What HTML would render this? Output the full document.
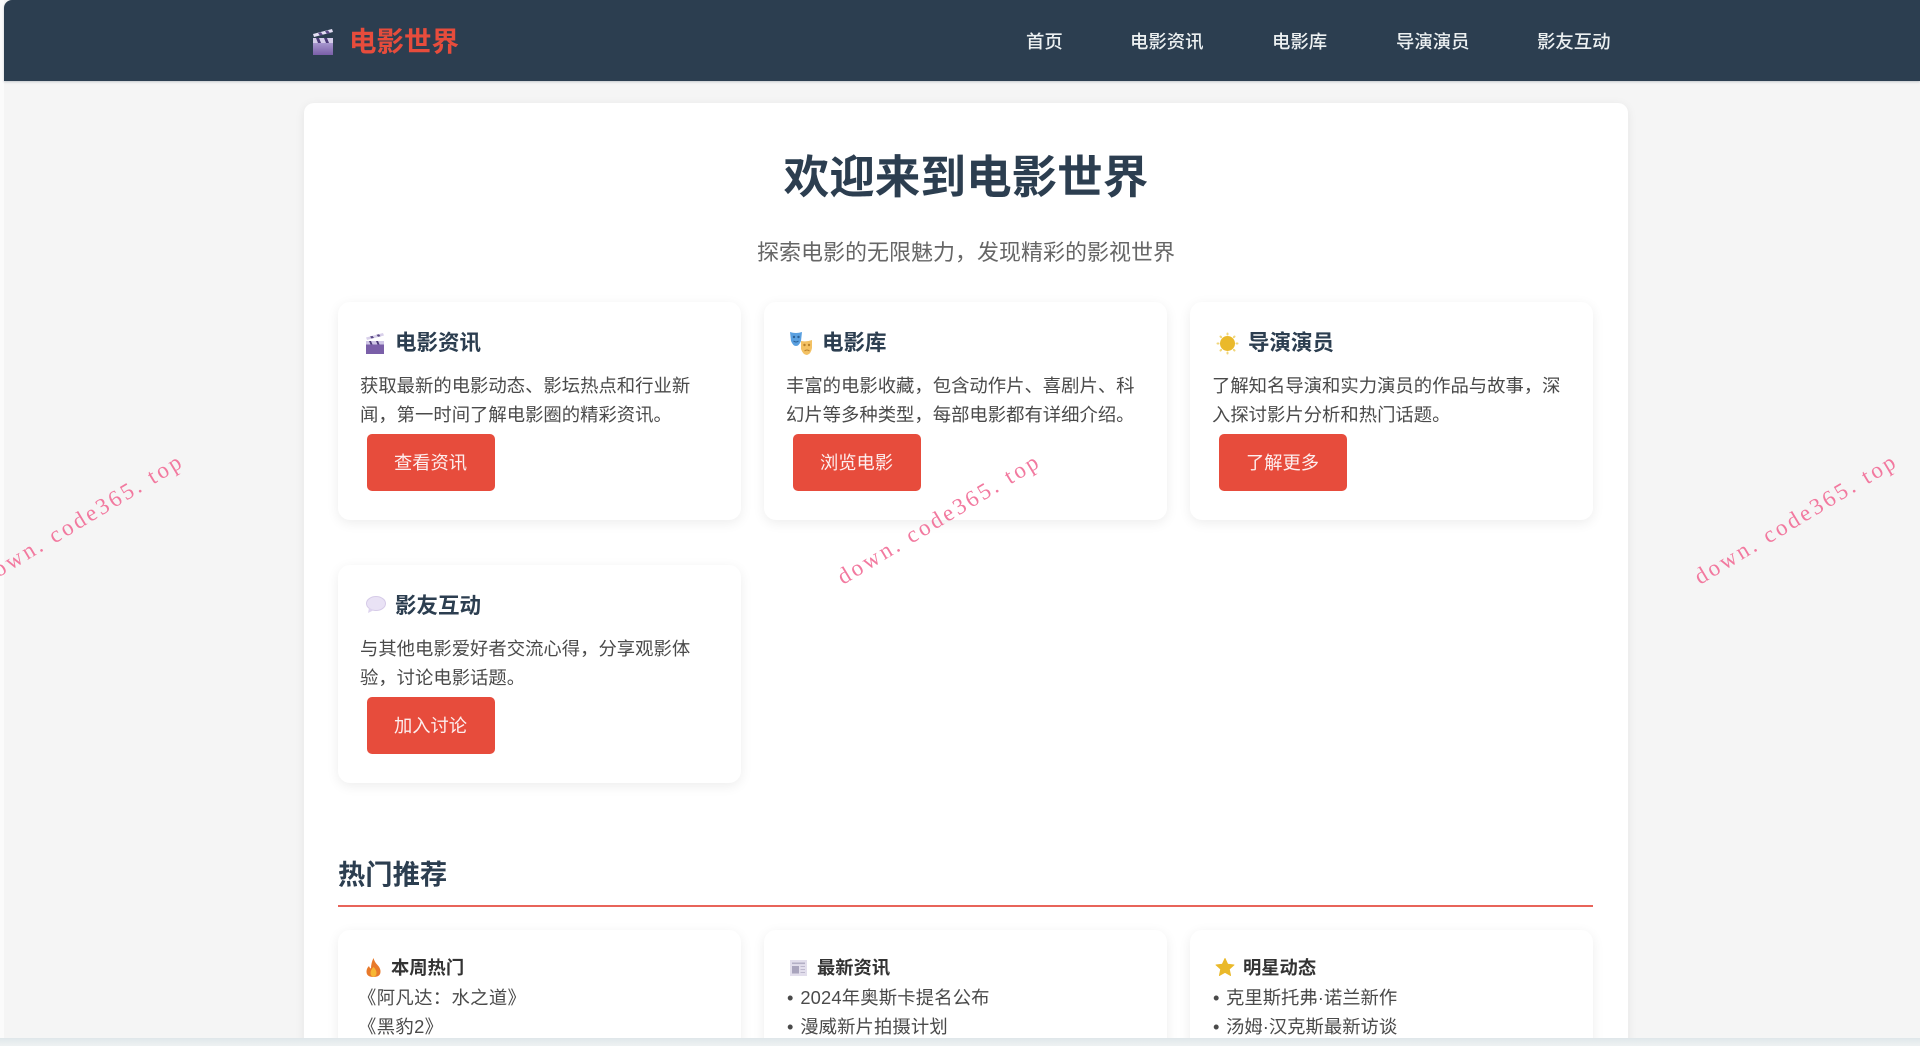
<!DOCTYPE html>
<html lang="zh"><head><meta charset="utf-8"><title>电影世界</title>
<style>
*{margin:0;padding:0;box-sizing:border-box}
html,body{width:1920px;height:1046px;overflow:hidden;background:#f5f5f5}
body{position:relative;font-family:"Liberation Sans","Noto Sans CJK SC",sans-serif;color:#444;filter:blur(.35px)}
.a{position:absolute;white-space:nowrap}
#edge{left:0;top:0;width:4px;height:1046px;background:#fbfbfb}
#hd{left:4px;top:0;width:1916px;height:81px;background:#2c3e50;border-top-left-radius:8px;box-shadow:0 1px 2px rgba(44,62,80,.25)}
.nav{top:25px;height:33px;line-height:33px;font-size:18.4px;color:#ecf0f1;font-weight:500}
#main{left:304px;top:103px;width:1324px;height:980px;background:#fff;border-radius:10px;box-shadow:0 2px 10px rgba(0,0,0,.07)}
.card{position:absolute;background:#fff;border-radius:12px;box-shadow:0 3px 12px rgba(0,0,0,.075);width:403px}
.t{font-size:21.5px;font-weight:700;color:#2c3e50;line-height:30px;height:30px}
.p{font-size:18.35px;line-height:29px;height:29px;color:#4a4a4a}
.btn{background:#e74c3c;color:#fdeeee;border-radius:5px;width:128px;height:57px;line-height:58px;text-align:center;font-size:18.3px;padding-right:1px}
.s{font-size:18.3px;font-weight:700;color:#333;line-height:28px;height:28px}
svg{position:absolute;overflow:visible}
#bar{left:0;top:1038px;width:1920px;height:8px;background:linear-gradient(#dfe6e9,#e6ecee 40%,#eef1f2)}
</style></head><body>
<div class="a" id="edge"></div>
<div class="a" id="hd"></div>

<svg style="left:312px;top:29px" width="22" height="26" viewBox="0 0 22 26"><defs><linearGradient id="g" x1="0" y1="0" x2="0" y2="1"><stop offset="0" stop-color="#b9aede"/><stop offset="1" stop-color="#7a5fa8"/></linearGradient></defs><rect x="1" y="9" width="20" height="17" fill="url(#g)"/><path d="M1 9h20v5H1z" fill="#d5cdea"/><path d="M4 9l2 5h3L7 9zM12 9l2 5h3l-2-5z" fill="#4b3b78"/><path d="M1 5L20 0l1 3L2 8z" fill="#e4dff3"/><path d="M6 4l3-.8 2 2.800-3 .8zM13 2.200l3-.8 2 2.800-3 .8z" fill="#5b4a86"/></svg>
<div class="a" style="left:349px;top:22px;height:40px;line-height:40px;font-size:27.5px;font-weight:700;color:#e74c3c">电影世界</div>

<div class="a nav" style="left:1026px">首页</div>
<div class="a nav" style="left:1130px">电影资讯</div>
<div class="a nav" style="left:1272px">电影库</div>
<div class="a nav" style="left:1396px">导演演员</div>
<div class="a nav" style="left:1537px">影友互动</div>

<div class="a" id="main"></div>
<div class="a" style="left:304px;width:1324px;top:145px;height:66px;line-height:66px;text-align:center;font-size:45.6px;font-weight:700;color:#2c3e50">欢迎来到电影世界</div>
<div class="a" style="left:304px;width:1324px;top:236px;height:34px;line-height:34px;text-align:center;font-size:22px;color:#666">探索电影的无限魅力，发现精彩的影视世界</div>

<div class="card" style="left:338px;top:302px;height:218px"></div>
<div class="card" style="left:764px;top:302px;height:218px"></div>
<div class="card" style="left:1190px;top:302px;height:218px"></div>
<div class="card" style="left:338px;top:565px;height:218px"></div>

<svg style="left:366px;top:333px" width="18" height="21" viewBox="0 0 18 21"><rect x="0" y="8" width="18" height="13" fill="#7a5fa8"/><path d="M0 8h18v3.500H0z" fill="#cfc6e6"/><path d="M3 8l1.500 3.500h2L5 8zM10 8l1.500 3.500h2L12 8z" fill="#4b3b78"/><path d="M0 4.500L17 0l1 2.500L1 7z" fill="#d8d0ea"/><path d="M4 3.500l2.500-.6 1.500 2-2.500.6zM10.500 1.800l2.500-.6 1.500 2-2.500.6z" fill="#5b4a86"/></svg>
<div class="a t" style="left:395px;top:328px">电影资讯</div>
<div class="a p" style="left:360px;top:371px">获取最新的电影动态、影坛热点和行业新</div>
<div class="a p" style="left:360px;top:400px">闻，第一时间了解电影圈的精彩资讯。</div>
<div class="a btn" style="left:367px;top:434px">查看资讯</div>

<svg style="left:790px;top:331px" width="23" height="24" viewBox="0 0 23 24"><path d="M0 1q6 2 12 0l-1 9q-2 5-5 5t-5-5z" fill="#5aa0e0"/><circle cx="4" cy="6" r="1.200" fill="#2a6096"/><circle cx="8.500" cy="6" r="1.200" fill="#2a6096"/><path d="M3.500 10q2.500 2 5 0" stroke="#2a6096" fill="none"/><path d="M11 10q6 1 11-1l0 8q-1 6-5 7-4 0-6-6z" fill="#f3c163"/><circle cx="14.500" cy="14" r="1.200" fill="#b8802a"/><circle cx="19" cy="14" r="1.200" fill="#b8802a"/><path d="M14.500 20q2.500-2 5 0" stroke="#b8802a" fill="none"/></svg>
<div class="a t" style="left:822px;top:328px">电影库</div>
<div class="a p" style="left:786px;top:371px">丰富的电影收藏，包含动作片、喜剧片、科</div>
<div class="a p" style="left:786px;top:400px">幻片等多种类型，每部电影都有详细介绍。</div>
<div class="a btn" style="left:793px;top:434px">浏览电影</div>

<svg style="left:1216px;top:332px" width="23" height="23" viewBox="0 0 23 23"><circle cx="11.500" cy="11.500" r="7.500" fill="#eab92a"/><g stroke="#f1d67a" stroke-width="2" stroke-linecap="round"><path d="M11.500 1.500v1M11.500 20.500v1M1.500 11.500h1M20.500 11.500h1M4.500 4.500l.7.7M17.800 17.800l.7.7M18.500 4.500l-.7.7M5.200 17.800l-.7.7"/></g></svg>
<div class="a t" style="left:1248px;top:328px">导演演员</div>
<div class="a p" style="left:1212px;top:371px">了解知名导演和实力演员的作品与故事，深</div>
<div class="a p" style="left:1212px;top:400px">入探讨影片分析和热门话题。</div>
<div class="a btn" style="left:1219px;top:434px">了解更多</div>

<svg style="left:365px;top:596px" width="21" height="18" viewBox="0 0 21 18"><ellipse cx="11" cy="7.500" rx="9.500" ry="7" fill="#e9e2f5" stroke="#d6cbe8"/><path d="M4 12l-1 5 6-3z" fill="#ddd3ee"/></svg>
<div class="a t" style="left:395px;top:591px">影友互动</div>
<div class="a p" style="left:360px;top:634px">与其他电影爱好者交流心得，分享观影体</div>
<div class="a p" style="left:360px;top:663px">验，讨论电影话题。</div>
<div class="a btn" style="left:367px;top:697px">加入讨论</div>

<div class="a" style="left:338px;top:855px;height:40px;line-height:40px;font-size:27.3px;font-weight:700;color:#2c3e50">热门推荐</div>
<div class="a" style="left:338px;top:905px;width:1255px;height:2px;background:#e8645a"></div>

<div class="card" style="left:338px;top:930px;height:160px"></div>
<div class="card" style="left:764px;top:930px;height:160px"></div>
<div class="card" style="left:1190px;top:930px;height:160px"></div>

<svg style="left:366px;top:958px" width="15" height="19" viewBox="0 0 15 19"><path d="M7.500 0q1 4 4 7 3 3 3 6.500Q14.500 19 7.500 19T.5 13.500q0-3 2.500-5.500 .5 2 2 2.500Q5 5 7.500 0z" fill="#e8792a"/><path d="M7.500 9q3 3 3 6t-3 4q-3-1-3-4t3-6z" fill="#f7b733"/></svg>
<div class="a s" style="left:391px;top:954px">本周热门</div>
<div class="a p" style="left:358px;top:983px;letter-spacing:.35px">《阿凡达：水之道》</div>
<div class="a p" style="left:358px;top:1012px;letter-spacing:.35px">《黑豹2》</div>

<svg style="left:790px;top:960px" width="17" height="16" viewBox="0 0 17 16"><rect width="17" height="16" fill="#e2deec"/><rect x="2" y="2.500" width="13" height="1.600" fill="#b3afc5"/><rect x="2" y="6" width="7" height="7.500" fill="#a9a4bd"/><path d="M10.500 6.500H15M10.500 9.500H15M10.500 12.500H15" stroke="#bdb8cd"/></svg>
<div class="a s" style="left:817px;top:954px">最新资讯</div>
<div class="a p" style="left:787px;top:983px;word-spacing:1.5px;letter-spacing:.15px">• 2024年奥斯卡提名公布</div>
<div class="a p" style="left:787px;top:1012px;word-spacing:1.5px;letter-spacing:.1px">• 漫威新片拍摄计划</div>

<svg style="left:1216px;top:958px" width="18" height="18" viewBox="0 0 19 18"><path d="M9.500 0l2.800 6 6.700.8-5 4.500 1.400 6.700-5.900-3.400L3.600 18 5 11.300 0 6.800 6.700 6z" fill="#eab92a" stroke="#eab92a" stroke-linejoin="round"/></svg>
<div class="a s" style="left:1243px;top:954px">明星动态</div>
<div class="a p" style="left:1213px;top:983px;word-spacing:1.5px">• 克里斯托弗·诺兰新作</div>
<div class="a p" style="left:1213px;top:1012px;word-spacing:1.5px">• 汤姆·汉克斯最新访谈</div>

<svg style="left:0;top:0" width="1920" height="1046">
<g font-family="'Liberation Serif',serif" font-size="23" fill="#f2799f">
<text transform="translate(-14 585) rotate(-31)" textLength="230" lengthAdjust="spacing">down. code365. top</text>
<text transform="translate(843 585) rotate(-31)" textLength="230" lengthAdjust="spacing">down. code365. top</text>
<text transform="translate(1700 585) rotate(-31)" textLength="230" lengthAdjust="spacing">down. code365. top</text>
</g></svg>
<div class="a" id="bar"></div>
</body></html>
